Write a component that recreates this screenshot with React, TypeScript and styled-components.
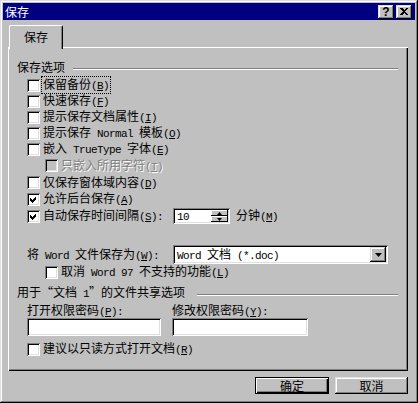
import React from "react";
import styled, { createGlobalStyle, css } from "styled-components";

const GlobalStyle = createGlobalStyle`
  html, body { margin: 0; padding: 0; background: #c0c0c0; }
  body {
    font-family: "Noto Sans CJK SC", "Liberation Sans", sans-serif;
    font-size: 12px;
    color: #000;
  }
  * { box-sizing: border-box; }
`;

const raised = css`
  box-shadow: inset -1px -1px #000, inset 1px 1px #dfdfdf, inset -2px -2px #808080, inset 2px 2px #fff;
`;
const sunken = css`
  box-shadow: inset 1px 1px #808080, inset -1px -1px #fff, inset 2px 2px #000, inset -2px -2px #dfdfdf;
`;

const Window = styled.div`
  width: 418px;
  height: 403px;
  padding: 3px;
  background: #c0c0c0;
  display: flex;
  flex-direction: column;
  ${raised}
`;

const TitleBar = styled.div`
  height: 17px;
  background: #000080;
  color: #fff;
  display: flex;
  align-items: center;
  padding: 0 3px 0 2px;
  line-height: 17px;
`;

const TitleText = styled.span`
  flex: 1;
`;

const CaptionButtons = styled.div`
  display: flex;
  gap: 2px;
`;

const CaptionButton = styled.div`
  width: 16px;
  height: 14px;
  background: #c0c0c0;
  display: flex;
  align-items: center;
  justify-content: center;
  font-family: "Liberation Sans", sans-serif;
  font-weight: bold;
  font-size: 12px;
  line-height: 1;
  color: #000;
  ${raised}
`;

const Body = styled.div`
  flex: 1;
  display: flex;
  flex-direction: column;
  padding: 5px 7px 0 5px;
`;

const TabStrip = styled.div`
  display: flex;
  padding-left: 1px;
  position: relative;
  z-index: 1;
  margin-bottom: -2px;
`;

const Tab = styled.div`
  width: 54px;
  height: 24px;
  background: #c0c0c0;
  border-top: 1px solid #fff;
  border-left: 1px solid #fff;
  border-right: 1px solid #000;
  border-radius: 2px 2px 0 0;
  box-shadow: inset -1px 0 #808080;
  display: flex;
  justify-content: center;
  padding-top: 4px;
  line-height: 14px;
`;

const Panel = styled.div`
  width: 400px;
  height: 324px;
  background: #c0c0c0;
  box-shadow: inset 1px 1px #fff, inset -1px -1px #000, inset -2px -2px #808080;
  padding: 12px 10px 0 9px;
  display: flex;
  flex-direction: column;
`;

const GroupHeader = styled.div<{ $top?: number; $gap: number }>`
  display: flex;
  align-items: center;
  height: 16px;
  gap: ${(p) => p.$gap}px;
  margin-top: ${(p) => p.$top ?? 0}px;
  line-height: 14px;
  white-space: nowrap;
`;

const GroupRule = styled.div`
  flex: 1;
  height: 2px;
  margin-top: 3px;
  border-top: 1px solid #808080;
  border-bottom: 1px solid #fff;
`;

const Options = styled.div<{ $top?: number }>`
  display: flex;
  flex-direction: column;
  padding-left: 10px;
  margin-top: ${(p) => p.$top ?? 0}px;
`;

const Row = styled.div<{ $h?: number; $indent?: number; $top?: number }>`
  display: flex;
  align-items: center;
  height: ${(p) => p.$h ?? 16}px;
  padding-left: ${(p) => p.$indent ?? 0}px;
  margin-top: ${(p) => p.$top ?? 0}px;
`;

const ControlRow = styled.div<{ $h: number; $top?: number }>`
  display: grid;
  grid-template-columns: 146px auto auto;
  justify-content: start;
  align-items: center;
  height: ${(p) => p.$h}px;
  margin-top: ${(p) => p.$top ?? 0}px;
`;

const CheckCell = styled.div`
  display: flex;
  align-items: center;
`;

const Box = styled.span<{ $disabled?: boolean }>`
  display: block;
  width: 13px;
  height: 13px;
  flex: none;
  background: ${(p) => (p.$disabled ? "#c0c0c0" : "#fff")};
  ${sunken}
  svg { display: block; }
`;

const Label = styled.span<{ $focused?: boolean; $disabled?: boolean }>`
  margin-left: 1px;
  padding: 0 1px;
  border: 1px dotted ${(p) => (p.$focused ? "#000" : "transparent")};
  line-height: 13px;
  white-space: nowrap;
  color: ${(p) => (p.$disabled ? "#808080" : "#000")};
  text-shadow: ${(p) => (p.$disabled ? "1px 1px 0 #fff" : "none")};
`;

const PlainLabel = styled.span<{ $left?: number }>`
  line-height: 14px;
  white-space: nowrap;
  margin-left: ${(p) => p.$left ?? 0}px;
`;

const M = styled.span`
  font-family: "Liberation Mono", monospace;
  font-size: 11px;
  letter-spacing: -0.6px;
  white-space: pre;
`;

const U = styled.span`
  text-decoration: underline;
`;

const Quote = styled.span`
  display: inline-block;
  width: 12px;
  text-align: ${(p: { $side: "l" | "r" }) => (p.$side === "l" ? "right" : "left")};
`;

const SpinField = styled.div`
  width: 57px;
  height: 16px;
  background: #fff;
  display: flex;
  align-items: center;
  padding: 2px 2px 2px 4px;
  ${sunken}
`;

const FieldValue = styled.span`
  flex: 1;
  line-height: 12px;
  white-space: nowrap;
`;

const SpinButtons = styled.div`
  display: flex;
  flex-direction: column;
  width: 17px;
  height: 12px;
`;

const SpinButton = styled.div`
  flex: 1;
  background: #c0c0c0;
  display: flex;
  align-items: center;
  justify-content: center;
  box-shadow: inset -1px -1px #000, inset 1px 1px #fff;
  svg { display: block; }
`;

const SelectField = styled.div`
  width: 215px;
  height: 19px;
  background: #fff;
  display: flex;
  align-items: center;
  padding: 2px;
  ${sunken}
`;

const SelectValue = styled.span`
  flex: 1;
  padding-left: 2px;
  line-height: 14px;
  white-space: nowrap;
`;

const DropButton = styled.div`
  width: 16px;
  height: 15px;
  background: #c0c0c0;
  display: flex;
  align-items: center;
  justify-content: center;
  ${raised}
  svg { display: block; }
`;

const FieldGrid = styled.div`
  display: grid;
  grid-template-columns: 145px 145px;
  padding-left: 10px;
`;

const FieldLabel = styled.span`
  height: 16px;
  line-height: 16px;
  white-space: nowrap;
  margin-top: 1px;
`;

const TextInput = styled.div<{ $w: number }>`
  width: ${(p) => p.$w}px;
  height: 18px;
  background: #fff;
  ${sunken}
`;

const Footer = styled.div`
  display: flex;
  justify-content: flex-end;
  gap: 6px;
  margin-top: 6px;
`;

const DialogButton = styled.div<{ $w: number; $default?: boolean }>`
  width: ${(p) => p.$w}px;
  height: 17px;
  background: #c0c0c0;
  display: flex;
  align-items: center;
  justify-content: center;
  line-height: 13px;
  ${(p) =>
    p.$default
      ? css`
          border: 1px solid #000;
          box-shadow: inset 1px 1px #fff, inset -1px -1px #000, inset -2px -2px #808080;
        `
      : raised}
`;

const Key: React.FC<{ k: string; colon?: boolean }> = ({ k, colon }) => (
  <M>
    (<U>{k}</U>){colon ? ":" : ""}
  </M>
);

const CheckMark = () => (
  <svg width="13" height="13" viewBox="0 0 13 13" shapeRendering="crispEdges">
    <polygon points="3,5 5,7 9,3 9,6 5,10 3,8" fill="#000" />
  </svg>
);

const Checkbox: React.FC<{ checked?: boolean; disabled?: boolean }> = ({ checked, disabled }) => (
  <Box $disabled={disabled}>{checked ? <CheckMark /> : null}</Box>
);

const Option: React.FC<{
  checked?: boolean;
  disabled?: boolean;
  focused?: boolean;
  indent?: number;
  h?: number;
  top?: number;
  children: React.ReactNode;
}> = ({ checked, disabled, focused, indent, h, top, children }) => (
  <Row $indent={indent} $h={h} $top={top}>
    <Checkbox checked={checked} disabled={disabled} />
    <Label $focused={focused} $disabled={disabled}>
      {children}
    </Label>
  </Row>
);

const CloseGlyph = () => (
  <svg width="8" height="7" viewBox="0 0 8 7" shapeRendering="crispEdges">
    <path d="M0 0h2l2 2 2-2h2L5 3.5 8 7H6L4 5 2 7H0l3-3.5z" fill="#000" />
  </svg>
);

const Arrow: React.FC<{ dir: "up" | "down"; size?: number }> = ({ dir, size = 3 }) => {
  const w = size * 2 - 1;
  const pts =
    dir === "up"
      ? `0,${size} ${w},${size} ${w / 2},0`
      : `0,0 ${w},0 ${w / 2},${size}`;
  return (
    <svg width={w} height={size} viewBox={`0 0 ${w} ${size}`}>
      <polygon points={pts} fill="#000" />
    </svg>
  );
};

export default function App() {
  return (
    <>
      <GlobalStyle />
      <Window>
        <TitleBar>
          <TitleText>保存</TitleText>
          <CaptionButtons>
            <CaptionButton>?</CaptionButton>
            <CaptionButton>
              <CloseGlyph />
            </CaptionButton>
          </CaptionButtons>
        </TitleBar>
        <Body>
          <TabStrip>
            <Tab>保存</Tab>
          </TabStrip>
          <Panel>
            <GroupHeader $gap={8}>
              <span>保存选项</span>
              <GroupRule />
            </GroupHeader>
            <Options $top={2}>
              <Option focused>
                保留备份<Key k="B" />
              </Option>
              <Option>
                快速保存<Key k="F" />
              </Option>
              <Option>
                提示保存文档属性<Key k="I" />
              </Option>
              <Option>
                提示保存<M> Normal </M>模板<Key k="O" />
              </Option>
              <Option>
                嵌入<M> TrueType </M>字体<Key k="E" />
              </Option>
              <Option disabled indent={18} h={17}>
                只嵌入所用字符<Key k="T" />
              </Option>
              <Option h={17}>
                仅保存窗体域内容<Key k="D" />
              </Option>
              <Option checked>
                允许后台保存<Key k="A" />
              </Option>
              <ControlRow $h={17}>
                <CheckCell>
                  <Checkbox checked />
                  <Label>
                    自动保存时间间隔<Key k="S" colon />
                  </Label>
                </CheckCell>
                <SpinField>
                  <FieldValue>
                    <M>10</M>
                  </FieldValue>
                  <SpinButtons>
                    <SpinButton>
                      <Arrow dir="up" />
                    </SpinButton>
                    <SpinButton>
                      <Arrow dir="down" />
                    </SpinButton>
                  </SpinButtons>
                </SpinField>
                <PlainLabel $left={6}>
                  分钟<Key k="M" />
                </PlainLabel>
              </ControlRow>
              <ControlRow $h={19} $top={21}>
                <PlainLabel>
                  将<M> Word </M>文件保存为<Key k="W" colon />
                </PlainLabel>
                <SelectField>
                  <SelectValue>
                    <M>Word </M>文档<M> (*.doc)</M>
                  </SelectValue>
                  <DropButton>
                    <Arrow dir="down" size={4} />
                  </DropButton>
                </SelectField>
              </ControlRow>
              <Option indent={18}>
                取消<M> Word 97 </M>不支持的功能<Key k="L" />
              </Option>
            </Options>
            <GroupHeader $gap={12} $top={5}>
              <span>
                用于<Quote $side="l">“</Quote>文档<M> 1</M>
                <Quote $side="r">”</Quote>的文件共享选项
              </span>
              <GroupRule />
            </GroupHeader>
            <FieldGrid>
              <FieldLabel>
                打开权限密码<Key k="P" colon />
              </FieldLabel>
              <FieldLabel>
                修改权限密码<Key k="Y" colon />
              </FieldLabel>
              <TextInput $w={134} />
              <TextInput $w={136} />
            </FieldGrid>
            <Options $top={5}>
              <Option>
                建议以只读方式打开文档<Key k="R" />
              </Option>
            </Options>
          </Panel>
          <Footer>
            <DialogButton $w={74} $default>
              确定
            </DialogButton>
            <DialogButton $w={73}>取消</DialogButton>
          </Footer>
        </Body>
      </Window>
    </>
  );
}
